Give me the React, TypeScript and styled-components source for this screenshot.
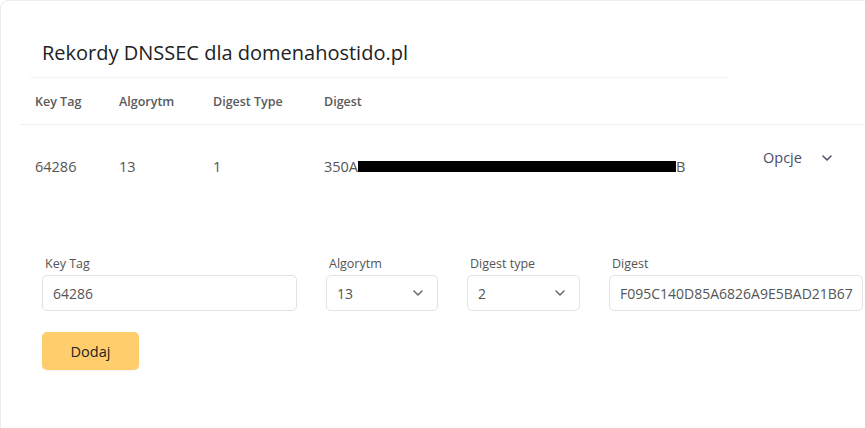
import styled, { createGlobalStyle } from 'styled-components'

const GlobalStyle = createGlobalStyle`
    html, body {
        margin: 0;
        padding: 0;
        background: #ffffff;
        overflow: hidden;
    }
    body {
        font-family: "Open Sans", "Liberation Sans", sans-serif;
        color: #555;
    }
`

interface DnsRecord {
    keyTag: string
    algorithm: string
    digestType: string
    digestStart: string
    digestEnd: string
}

const records: DnsRecord[] = [
    { keyTag: '64286', algorithm: '13', digestType: '1', digestStart: '350A', digestEnd: 'B' },
]

function Chevron({ size = 10, color = '#666' }: { size?: number, color?: string }) {
    return (
        <svg width={size} height={size * 0.6} viewBox="0 0 10 6" fill="none">
            <path d="M1 1l4 4 4-4" stroke={color} strokeWidth="1.5" strokeLinecap="round" strokeLinejoin="round" />
        </svg>
    )
}

export default function App() {
    return (
        <>
            <GlobalStyle />
            <Card>
                <TitleBar>
                    <Title>Rekordy DNSSEC dla domenahostido.pl</Title>
                </TitleBar>

                <Table>
                    <HeadRow>
                        <HeadCell>Key Tag</HeadCell>
                        <HeadCell>Algorytm</HeadCell>
                        <HeadCell>Digest Type</HeadCell>
                        <HeadCell>Digest</HeadCell>
                        <HeadCell />
                    </HeadRow>
                    {records.map((r) => (
                        <DataRow key={r.keyTag}>
                            <Cell>{r.keyTag}</Cell>
                            <Cell>{r.algorithm}</Cell>
                            <Cell>{r.digestType}</Cell>
                            <Cell>
                                {r.digestStart}
                                <Redacted />
                                {r.digestEnd}
                            </Cell>
                            <Options>
                                Opcje
                                <Chevron size={10} color="#4b4b6b" />
                            </Options>
                        </DataRow>
                    ))}
                </Table>

                <Form>
                    <Fields>
                        <Field $width={255}>
                            <Label>Key Tag</Label>
                            <Input>64286</Input>
                        </Field>
                        <Field $width={112}>
                            <Label>Algorytm</Label>
                            <Select>
                                <span>13</span>
                                <Chevron />
                            </Select>
                        </Field>
                        <Field $width={113}>
                            <Label>Digest type</Label>
                            <Select>
                                <span>2</span>
                                <Chevron />
                            </Select>
                        </Field>
                        <Field $width={254}>
                            <Label>Digest</Label>
                            <Input>F095C140D85A6826A9E5BAD21B67</Input>
                        </Field>
                    </Fields>
                    <AddButton>Dodaj</AddButton>
                </Form>
            </Card>
        </>
    )
}

const Card = styled.div`
    width: 920px;
    height: 440px;
    box-sizing: border-box;
    border: 1px solid #ececec;
    border-radius: 8px;
    background: #fff;
`

const TitleBar = styled.div`
    width: 698px;
    margin-left: 29px;
    padding: 39px 0 0 12px;
    height: 77px;
    box-sizing: border-box;
    border-bottom: 1px solid #f4f4f4;
`

const Title = styled.h2`
    margin: 0;
    font-size: 20px;
    font-weight: 400;
    line-height: 26px;
    color: #222;
`

const Table = styled.div`
    margin-left: 19px;
`

const HeadRow = styled.div`
    display: grid;
    grid-template-columns: 84px 94px 111px 1fr 160px;
    align-items: center;
    height: 46px;
    border-bottom: 1px solid #eeeeee;
`

const DataRow = styled.div`
    display: grid;
    grid-template-columns: 84px 94px 111px 1fr 160px;
    align-items: center;
    height: 82px;
`

const HeadCell = styled.div`
    padding-left: 15px;
    font-size: 12.5px;
    font-weight: 600;
    color: #5a5a5a;
`

const Cell = styled.div`
    padding-left: 15px;
    font-size: 14.5px;
    color: #555;
    display: flex;
    align-items: center;
    white-space: nowrap;
`

const Redacted = styled.span`
    display: inline-block;
    width: 318px;
    height: 11px;
    background: #000;
`

const Options = styled.div`
    display: flex;
    align-items: center;
    gap: 20px;
    padding-left: 4px;
    margin-bottom: 17px;
    font-size: 14.5px;
    color: #4b4b6b;
`

const Form = styled.div`
    padding: 49px 0 0 41px;
`

const Fields = styled.div`
    display: flex;
    gap: 29px;
`

const Field = styled.div<{ $width: number }>`
    display: flex;
    flex-direction: column;
    width: ${(p) => p.$width}px;
    flex-shrink: 0;
`

const Label = styled.label`
    padding-left: 3px;
    margin-bottom: 3px;
    font-size: 12.5px;
    line-height: 16px;
    color: #555;
`

const Input = styled.div`
    height: 36px;
    box-sizing: border-box;
    border: 1px solid #e2e2e2;
    border-radius: 5px;
    padding: 0 10px;
    display: flex;
    align-items: center;
    font-size: 14px;
    color: #555;
    white-space: nowrap;
    overflow: hidden;
`

const Select = styled(Input)`
    justify-content: space-between;
    padding-right: 14px;
`

const AddButton = styled.button`
    margin-top: 21px;
    width: 97px;
    height: 38px;
    border: none;
    border-radius: 5px;
    background: #ffcd6c;
    font-family: inherit;
    font-size: 14.5px;
    color: #222;
    box-shadow: 0 1px 2px rgba(0, 0, 0, 0.06);
`
